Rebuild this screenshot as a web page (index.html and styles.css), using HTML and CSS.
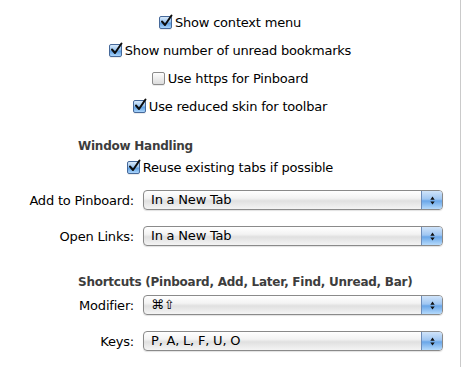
FILE: index.html
```html
<!DOCTYPE html>
<html>
<head>
<meta charset="utf-8">
<link rel="stylesheet" href="styles.css">
</head>
<body>
<div class="pane">
  <div class="checks">
    <div class="row"><label class="check"><span class="box on"><svg viewBox="0 0 14 14"><path d="M3 7.5 L6 11 L12.5 1.5"/></svg></span>Show context menu</label></div>
    <div class="row"><label class="check"><span class="box on"><svg viewBox="0 0 14 14"><path d="M3 7.5 L6 11 L12.5 1.5"/></svg></span>Show number of unread bookmarks</label></div>
    <div class="row"><label class="check"><span class="box"></span>Use https for Pinboard</label></div>
    <div class="row"><label class="check"><span class="box on"><svg viewBox="0 0 14 14"><path d="M3 7.5 L6 11 L12.5 1.5"/></svg></span>Use reduced skin for toolbar</label></div>
  </div>

  <h3 class="heading heading-window">Window Handling</h3>
  <div class="row row-reuse"><label class="check"><span class="box on"><svg viewBox="0 0 14 14"><path d="M3 7.5 L6 11 L12.5 1.5"/></svg></span>Reuse existing tabs if possible</label></div>

  <div class="form-row form-first">
    <span class="label">Add to Pinboard:</span>
    <div class="select"><span class="value">In a New Tab</span><span class="arrows"><svg viewBox="0 0 8 12"><path d="M4 1.5 L6.5 5 L1.5 5 Z M1.5 7 L6.5 7 L4 10.5 Z"/></svg></span></div>
  </div>
  <div class="form-row form-gap">
    <span class="label">Open Links:</span>
    <div class="select"><span class="value">In a New Tab</span><span class="arrows"><svg viewBox="0 0 8 12"><path d="M4 1.5 L6.5 5 L1.5 5 Z M1.5 7 L6.5 7 L4 10.5 Z"/></svg></span></div>
  </div>

  <h3 class="heading heading-shortcuts">Shortcuts (Pinboard, Add, Later, Find, Unread, Bar)</h3>
  <div class="form-row form-mod">
    <span class="label">Modifier:</span>
    <div class="select"><span class="value">⌘⇧</span><span class="arrows"><svg viewBox="0 0 8 12"><path d="M4 1.5 L6.5 5 L1.5 5 Z M1.5 7 L6.5 7 L4 10.5 Z"/></svg></span></div>
  </div>
  <div class="form-row form-gap">
    <span class="label">Keys:</span>
    <div class="select"><span class="value">P, A, L, F, U, O</span><span class="arrows"><svg viewBox="0 0 8 12"><path d="M4 1.5 L6.5 5 L1.5 5 Z M1.5 7 L6.5 7 L4 10.5 Z"/></svg></span></div>
  </div>
</div>
</body>
</html>
```

FILE: styles.css
```css
html, body {
  margin: 0;
  padding: 0;
  background: #fff;
}
body {
  font-family: "DejaVu Sans", "Liberation Sans", sans-serif;
  font-size: 13px;
  letter-spacing: -0.2px;
  color: #000;
}
.pane {
  width: 461px;
  height: 367px;
  border-right: 1px solid #cacaca;
  padding-top: 8px;
  box-sizing: border-box;
  display: flex;
  flex-direction: column;
}
.checks {
  display: flex;
  flex-direction: column;
}
.row {
  height: 28px;
  display: flex;
  align-items: center;
  justify-content: center;
}
.check {
  display: flex;
  align-items: center;
  gap: 3px;
}
.box {
  position: relative;
  width: 11px;
  height: 11px;
  border: 1px solid #8c8c8c;
  border-radius: 2px;
  background: linear-gradient(#fefefe, #dcdcdc);
  box-shadow: 0 1px 0 rgba(0,0,0,0.08);
  flex: none;
}
.box.on {
  border-color: #46699a;
  background: linear-gradient(#d8e9fa 0%, #9cc6f0 45%, #5f9fe2 55%, #a9d4fb 100%);
}
.box svg {
  position: absolute;
  left: -1px;
  top: -3px;
  width: 14px;
  height: 14px;
  overflow: visible;
}
.box svg path {
  fill: none;
  stroke: #0c0c0c;
  stroke-width: 2;
  stroke-linecap: round;
  stroke-linejoin: round;
}
.heading {
  margin: 0;
  font-size: 12px;
  font-weight: bold;
  color: #3d3d3d;
  line-height: 16px;
  padding-left: 78px;
  letter-spacing: -0.25px;
}
.heading-window {
  margin-top: 18px;
}
.row-reuse {
  margin-top: 2px;
  height: 22px;
}
.heading-shortcuts {
  margin-top: 28px;
}
.form-row {
  display: flex;
  align-items: center;
  gap: 9px;
}
.form-first {
  margin-top: 12px;
}
.form-gap {
  margin-top: 16px;
}
.form-mod {
  margin-top: 5px;
}
.label {
  width: 134px;
  text-align: right;
  flex: none;
}
.select {
  width: 300px;
  height: 20px;
  box-sizing: border-box;
  border: 1px solid #8a8a8a;
  border-radius: 4px;
  background: linear-gradient(#ffffff 0%, #f3f3f3 40%, #e0e0e0 55%, #f4f4f4 100%);
  box-shadow: 0 1px 1px rgba(0,0,0,0.12);
  display: flex;
  align-items: center;
  overflow: hidden;
}
.value {
  flex: 1;
  padding-left: 7px;
  line-height: 18px;
}
.arrows {
  width: 20px;
  height: 18px;
  flex: none;
  border-left: 1px solid #6d8cb8;
  background: linear-gradient(#d0e4fa 0%, #9fc6f2 45%, #69a6e8 55%, #b5dafc 100%);
  display: flex;
  align-items: center;
  justify-content: center;
}
.arrows svg {
  width: 7px;
  height: 11px;
}
.arrows svg path {
  fill: #111;
}
```
